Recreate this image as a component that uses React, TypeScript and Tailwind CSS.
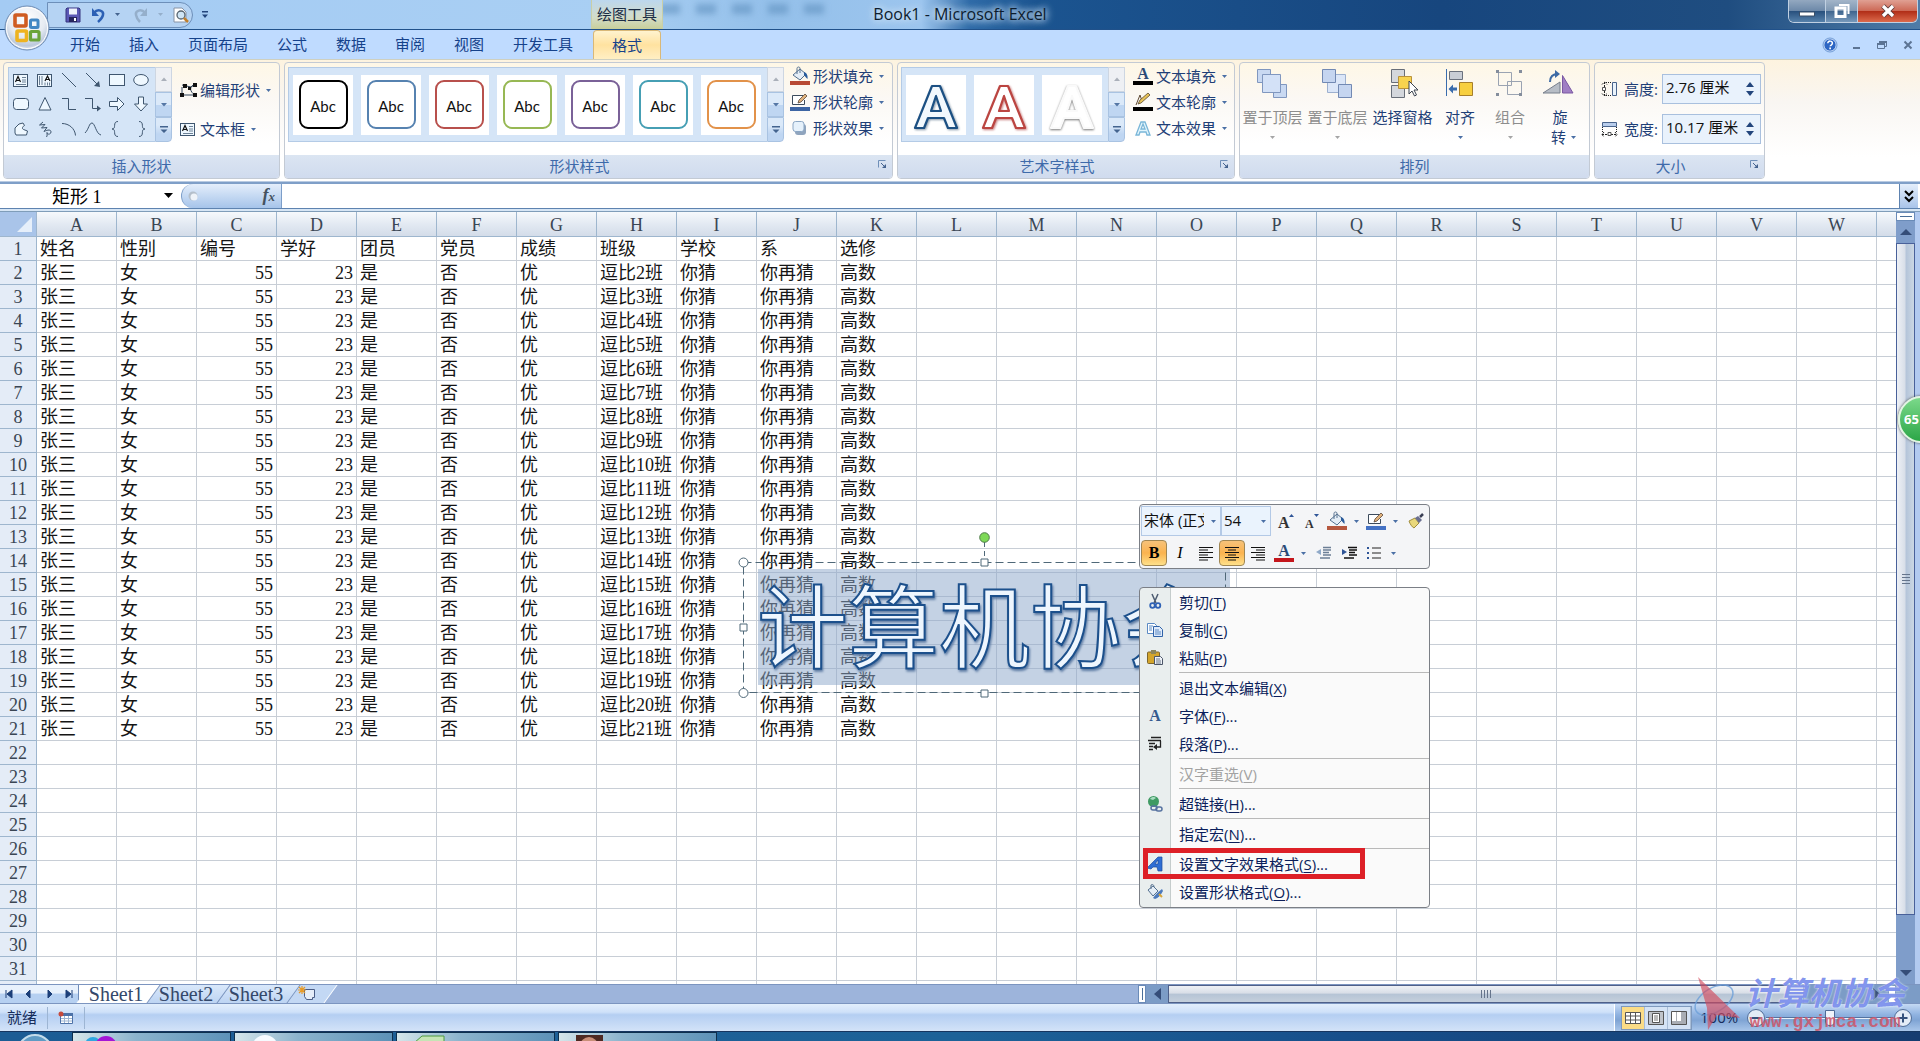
import React from 'react';

const UI = "font-['Open_Sans','Noto_Sans_CJK_SC',sans-serif]";
const SONG = "font-['Liberation_Serif','Noto_Sans_CJK_SC',serif]";

type P = { children?: React.ReactNode };

function Icon({ w = 16, h = 16, children }: P & { w?: number; h?: number }) {
  return (
    <svg width={w} height={h} viewBox={`0 0 ${w} ${h}`} fill="none" className="shrink-0 overflow-visible" aria-hidden="true">
      {children}
    </svg>
  );
}

function Down({ color = '#4a6fa5' }: { color?: string }) {
  return (
    <Icon w={7} h={5}>
      <path d="M1 1h5L3.5 4z" fill={color} />
    </Icon>
  );
}

/* ---------- Title bar ---------- */

function OfficeLogo() {
  return (
    <svg width="48" height="48" viewBox="0 0 48 48" aria-hidden="true">
      <defs>
        <radialGradient id="orb" cx="50%" cy="30%" r="75%">
          <stop offset="0" stopColor="#ffffff" />
          <stop offset="0.55" stopColor="#e6ebf2" />
          <stop offset="0.8" stopColor="#bcc9dc" />
          <stop offset="1" stopColor="#f4f8fc" />
        </radialGradient>
      </defs>
      <circle cx="24" cy="24" r="22" fill="url(#orb)" stroke="#6f8db4" />
      <circle cx="24" cy="24" r="20.5" stroke="#ffffff" fill="none" />
      <g fill="none" strokeWidth="3.6">
        <rect x="12" y="11" width="11" height="11" rx="1" stroke="#cf5c22" />
        <rect x="27.5" y="16" width="7.5" height="7.5" rx="1" stroke="#4287c4" strokeWidth="3" />
        <rect x="14" y="27" width="9.500" height="9.500" rx="1" stroke="#eeb320" />
        <rect x="27.500" y="27.500" width="8.500" height="8.500" rx="1" stroke="#6ba43a" strokeWidth="3.200" />
      </g>
    </svg>
  );
}

function TitleBar() {
  return (
    <header className="relative flex h-[30px] shrink-0 items-center border-b border-[#20518a] bg-[linear-gradient(90deg,#a4cbf3_0%,#a9cff3_32%,#94c0ea_40%,#9cc5ee_48%,#2f6ba8_50.5%,#1b5490_54%,#17467e_75%,#1f4d80_90%,#4f7ca8_100%)]">
      <button aria-label="Office 按钮" className="absolute left-[3px] top-1 z-20">
        <OfficeLogo />
      </button>
      <div className="ml-[47px] flex h-[26px] w-[146px] items-center rounded-r-full border border-[#6d8fb9] bg-[#b5d3f3] pl-[17px]">
        <button aria-label="保存" className="mr-[9px]">
          <Icon>
            <path d="M2 1h12l1 1v13H1V2z" fill="#5b58b5" stroke="#37347f" />
            <path d="M4 1.500h8v6H4z" fill="#eef2fb" />
            <path d="M4 10h8v5H4z" fill="#26255e" />
            <path d="M9 11h2v3H9z" fill="#fff" />
          </Icon>
        </button>
        <button aria-label="撤消" className="mr-2">
          <Icon>
            <path d="M4 6c4-5 10-2 9 2-.5 3-3 5-5 7" stroke="#2c60b4" strokeWidth="2.500" />
            <path d="M2 1v8h7z" fill="#2c60b4" />
          </Icon>
        </button>
        <button aria-label="撤消列表" className="mr-3"><Down color="#45648f" /></button>
        <button aria-label="恢复" className="mr-2">
          <Icon>
            <path d="M12 6C8 1 2 4 3 8c.5 3 2 5 4 7" stroke="#95afcb" strokeWidth="2.500" />
            <path d="M14 1v8H7z" fill="#95afcb" />
          </Icon>
        </button>
        <button aria-label="恢复列表" className="mr-2"><Down color="#95afcb" /></button>
        <button aria-label="打印预览">
          <Icon w={17}>
            <path d="M2 1h8l4 4v10H2z" fill="#fff" stroke="#8793a5" />
            <circle cx="9" cy="8" r="4" fill="#cfe5f5" stroke="#56636f" strokeWidth="1.300" />
            <path d="M12 11l4 4" stroke="#c07f2e" strokeWidth="2.500" />
          </Icon>
        </button>
      </div>
      <button aria-label="自定义快速访问工具栏" className="ml-2">
        <Icon w={8} h={9}>
          <path d="M1 1h6v1.500H1zM1 4.500h6L4 8z" fill="#23457c" />
        </Icon>
      </button>
      <div className="absolute left-[660px] top-1 flex gap-4 blur-[3px]" aria-hidden="true">
        {[0, 1, 2, 3, 4].map((i) => (
          <span key={i} className="h-2.5 w-5 bg-[#5f8fbe]/60" />
        ))}
      </div>
      <h1 className="absolute inset-x-0 top-0 text-center text-base leading-7 text-[#0c1c2e] [text-shadow:0_0_6px_#cfe3f5,0_0_8px_#cfe3f5,0_0_10px_#b8d4ee]">
        Book1 - Microsoft Excel
      </h1>
      <div className="absolute left-[591px] top-0 flex h-[29px] w-[72px] items-center justify-center border-x border-[#c9cfa8] bg-[linear-gradient(180deg,#bcd7ee_0%,#d3dcc9_60%,#c8cf9a_100%)] text-[15px] text-[#1a2c44]">
        绘图工具
      </div>
      <div className="absolute right-0.5 top-0 flex h-[23px] overflow-hidden rounded-b-md border border-t-0 border-[#c0d0e2]">
        <button aria-label="最小化" className="flex w-9 items-center justify-center bg-[linear-gradient(180deg,#93a8c0_0%,#6d89a9_48%,#274f7c_50%,#5681ab_100%)]">
          <Icon>
            <path d="M.5 9h15v4H.5z" fill="#fff" stroke="#3b4f68" />
          </Icon>
        </button>
        <button aria-label="还原" className="flex w-[33px] items-center justify-center border-x border-[#c0d0e2] bg-[linear-gradient(180deg,#a3b5c9_0%,#7f98b3_48%,#3e648d_50%,#7799bb_100%)]">
          <Icon w={18} h={18}>
            <path d="M6 3h9.500v9" stroke="#fff" strokeWidth="2" />
            <rect x="3" y="6" width="9" height="8.500" stroke="#fff" strokeWidth="3" />
          </Icon>
        </button>
        <button aria-label="关闭" className="flex w-[59px] items-center justify-center bg-[linear-gradient(180deg,#e0a093_0%,#cd6a57_48%,#b02c16_50%,#dc6a4c_100%)]">
          <Icon>
            <path d="M3 3l10 10M13 3L3 13" stroke="#5a3a3a" strokeWidth="5" />
            <path d="M3 3l10 10M13 3L3 13" stroke="#fff" strokeWidth="3.200" />
          </Icon>
        </button>
      </div>
    </header>
  );
}

function TabStrip() {
  const tabs = ['开始', '插入', '页面布局', '公式', '数据', '审阅', '视图', '开发工具'];
  return (
    <nav className="flex h-[29px] shrink-0 items-center bg-[#bfdbff] pl-[70px] text-[15px] text-[#15428b]">
      <div className="flex gap-[29px]">
        {tabs.map((t) => (
          <button key={t}>{t}</button>
        ))}
      </div>
      <button className="ml-5 h-[29px] w-[68px] rounded-t border border-b-0 border-[#d9b878] bg-[linear-gradient(180deg,#fff3cf_0%,#ffe2a0_50%,#ffefc4_100%)]">
        格式
      </button>
      <div className="ml-auto flex items-center gap-2.5 pr-1">
        <button aria-label="帮助">
          <Icon>
            <circle cx="8" cy="8" r="6.200" fill="#2d66c4" stroke="#dce9fb" />
            <circle cx="8" cy="8" r="7" stroke="#4e7fc6" strokeWidth=".7" />
            <path d="M5.800 6.300c0-3 4.600-2.800 4.600 0 0 1.700-2.200 1.700-2.200 3" stroke="#fff" strokeWidth="1.500" />
            <path d="M7.300 10.500h1.700v1.700H7.300z" fill="#fff" />
          </Icon>
        </button>
        <button aria-label="最小化工作簿">
          <Icon><path d="M5 10h7v2H5z" fill="#5c7494" /></Icon>
        </button>
        <button aria-label="还原工作簿">
          <Icon>
            <path d="M5.500 4.500h7v5h-7z" stroke="#5c7494" />
            <path d="M5 4h8v2H5z" fill="#5c7494" />
            <path d="M3.500 6.500h7v5h-7z" fill="#bfdbff" stroke="#5c7494" />
            <path d="M3 6h8v2H3z" fill="#5c7494" />
          </Icon>
        </button>
        <button aria-label="关闭工作簿">
          <Icon><path d="M4.500 4.500l7 7M11.500 4.500l-7 7" stroke="#5c7494" strokeWidth="2" /></Icon>
        </button>
      </div>
    </nav>
  );
}

/* ---------- Ribbon ---------- */

function Group({ title, className, launcher, children }: P & { title: string; className: string; launcher?: boolean }) {
  return (
    <section
      className={`flex h-[117px] shrink-0 flex-col overflow-hidden rounded border border-[#c3cad4] bg-[linear-gradient(180deg,#fef7e6_0%,#fbf8f4_30%,#ffffff_70%)] ${className}`}
    >
      <div className="flex flex-1">{children}</div>
      <div className="flex h-[23px] items-center bg-[linear-gradient(180deg,#dbe5f2,#d0dbee)] text-[15px] leading-none text-[#3e6aaa]">
        <h2 className="flex-1 text-center">{title}</h2>
        {launcher && (
          <button aria-label={`${title}选项`} className="mb-1.5 mr-1">
            <Icon w={14} h={10}>
              <path d="M4.500 8.500v-7h7" stroke="#6f8fb8" />
              <path d="M7 4l3.500 3.500" stroke="#45638f" />
              <path d="M12 5v4H8z" fill="#45638f" />
            </Icon>
          </button>
        )}
      </div>
    </section>
  );
}

function GalleryScroll() {
  return (
    <div className="flex w-[17px] flex-col text-[0px]">
      <button aria-label="上一行" className="flex flex-1 items-center justify-center border border-[#cdd6e2] bg-[#eef0f4]">
        <Icon w={8} h={5}><path d="M1 4h6L4 .5z" fill="#aab0ba" /></Icon>
      </button>
      <button aria-label="下一行" className="flex flex-1 items-center justify-center border border-[#a9c3e2] bg-[linear-gradient(180deg,#dbe9f9_50%,#bfd6f2_50%)]">
        <Icon w={8} h={5}><path d="M1 1h6L4 4.500z" fill="#5577a5" /></Icon>
      </button>
      <button aria-label="更多" className="flex flex-1 items-center justify-center rounded-br border border-[#a9c3e2] bg-[linear-gradient(180deg,#dbe9f9_30%,#bfd6f2_70%)]">
        <Icon w={8} h={9}><path d="M0 1h8v1.500H0zM.5 4.500h7L4 8z" fill="#44648f" /></Icon>
      </button>
    </div>
  );
}

const S = '#3f566f';
const F = '#eff8ff';
const shapes: [string, React.ReactNode][] = [
  ['文本框', <><rect x=".5" y="2.500" width="14" height="12" fill={F} stroke={S} /><path d="M2.500 10L5 4.500 7.500 10M3.500 8.500h3" stroke="#111" strokeWidth="1.200" /><path d="M9 5.500h4M9 8h4M3 12.500h10M9 10h4" stroke="#6d8196" /></>],
  ['竖排文本框', <><rect x=".5" y="2.500" width="14" height="12" fill={F} stroke={S} /><path d="M8 9l2.500-5L13 9M9 7.500h3" stroke="#111" strokeWidth="1.200" /><path d="M2.500 4v9M5 4v9M8 10.500v3M10.500 10.500v3M12.500 10.500v3" stroke="#6d8196" /></>],
  ['直线', <path d="M1 1l14 14" stroke={S} />],
  ['箭头', <><path d="M1 1l12 12" stroke={S} /><path d="M15 15l-6-1 5-5z" fill={S} /></>],
  ['矩形', <rect x=".5" y="2.500" width="15" height="11" fill={F} stroke={S} />],
  ['椭圆', <ellipse cx="8" cy="8" rx="7.300" ry="5.500" fill={F} stroke={S} />],
  ['圆角矩形', <rect x=".5" y="2.500" width="15" height="11" rx="3" fill={F} stroke={S} />],
  ['三角形', <path d="M8 1.500l6 12.500H2z" fill={F} stroke={S} />],
  ['肘形连接符', <path d="M1 2.500h6.500v11H15" stroke={S} />],
  ['肘形箭头', <><path d="M0 2.500h7.500v10H14" stroke={S} /><path d="M16 12.500l-4-3v6z" fill={S} /></>],
  ['右箭头', <path d="M.5 5.500h8V1.500l6.500 6.500-6.500 6.500v-4h-8z" fill={F} stroke={S} />],
  ['下箭头', <path d="M5.500 1v7h-4l6.500 7 6.500-7h-4V1z" fill={F} stroke={S} />],
  ['任意多边形', <path d="M3 14h10.500l1-4-4-1.500c-2-1-1-3 1-4L10 2 6 3 2 7v5z" fill={F} stroke={S} />],
  ['自由曲线', <path d="M6 1L2.500 4 8 3.500 4.500 7l5.500-.5-3 4c4-2 7-2 7 .5s-4 3-4 .5c0 2 .5 3-.5 4.500" stroke={S} />],
  ['弧形', <path d="M1 2.500c7 0 13 5 13.500 12" stroke={S} />],
  ['曲线', <path d="M0 12C4 8 4 2 7 2s4 11 9 12" stroke={S} />],
  ['左大括号', <path d="M9 .5C3 .5 8 8 3 8c5 0 0 7.500 6 7.500" stroke={S} />],
  ['右大括号', <path d="M6 .5c6 0 1 7.500 6 7.500-5 0 0 7.500-6 7.500" stroke={S} />],
];

function MenuButton({ icon, label }: { icon: React.ReactNode; label: string }) {
  return (
    <button className="flex h-[26px] items-center text-[15px] leading-5 text-[#1f3f77]">
      {icon}
      <span className="ml-[3px] mr-[5px] whitespace-nowrap">{label}</span>
      <Down />
    </button>
  );
}

function Bucket({ bar = '#b84a34' }: { bar?: string }) {
  return (
    <Icon w={20} h={20}>
      <path d="M3 9l7-6 6 5-6 6z" fill="#e4edf6" stroke="#54708f" />
      <path d="M7 8V2.500c0-2 3-2 3 0V7" stroke="#54708f" />
      <path d="M14 6c3 1 4 4 3.500 7-1.500-1-2.500-3-3.500-4z" fill="#2a5c9c" />
      <path d="M0 15h20v4H0z" fill={bar} />
    </Icon>
  );
}

function Pen({ bar = '#3e65a4' }: { bar?: string }) {
  return (
    <Icon w={20} h={20}>
      <path d="M13 3.500H2.500v9h12V8" stroke="#3c4b5c" fill="#fff" />
      <path d="M8 11l1-3 6-6 2 2-6 6z" fill="#e0b27c" stroke="#5a4637" strokeWidth=".8" />
      <path d="M0 15h20v4H0z" fill={bar} />
    </Icon>
  );
}

function LetterA({ bar }: { bar: string }) {
  return (
    <Icon w={20} h={20}>
      <text x="10" y="13" textAnchor="middle" fontFamily="Liberation Serif" fontWeight="bold" fontSize="16" fill="#2b4a78">A</text>
      <path d="M0 15h20v4H0z" fill={bar} />
    </Icon>
  );
}

function BigButton({ label, icon, disabled, narrow, last }: { label: string; icon: React.ReactNode; disabled?: boolean; narrow?: boolean; last?: boolean }) {
  return (
    <button
      disabled={disabled}
      className={`flex flex-col items-center pt-1 text-[15px] leading-5 text-[#1f3f77] disabled:text-[#8d8d8d] ${narrow ? 'w-[50px]' : 'w-[65px]'}`}
    >
      <span className="pr-1">{icon}</span>
      {last ? (
        <>
          <span className="mt-2">旋</span>
          <span className="flex items-center gap-1 pl-2">转<Down /></span>
        </>
      ) : (
        <>
          <span className="mt-2 whitespace-nowrap">{label}</span>
          {label !== '选择窗格' && <span className="mt-2"><Down color={disabled ? '#a5a5a5' : '#4a6fa5'} /></span>}
        </>
      )}
    </button>
  );
}

function SizeField({ id, label, value, icon }: { id: string; label: string; value: string; icon: React.ReactNode }) {
  return (
    <div className="flex h-[30px] items-center">
      {icon}
      <label htmlFor={id} className="ml-1.5 w-[38px] whitespace-nowrap text-[15px] text-[#1f3f77]">{label}</label>
      <div className="flex h-[30px] w-[99px] items-center border border-[#a9c0de] bg-[#e9f2fc] pr-1">
        <input id={id} defaultValue={value} className="w-0 min-w-0 flex-1 bg-transparent pb-1 pl-[3px] text-[15px] text-[#111] outline-none" />
        <div className="flex flex-col gap-1">
          <button aria-label={`增加${label}`}><Icon w={13} h={5}><path d="M3 5h8L7 0z" fill="#23457c" /></Icon></button>
          <button aria-label={`减少${label}`}><Icon w={13} h={5}><path d="M3 0h8L7 5z" fill="#23457c" /></Icon></button>
        </div>
      </div>
    </div>
  );
}

function WordArtTile({ fill, stroke, label, blur }: { fill: string; stroke: string; label: string; blur: string }) {
  return (
    <button aria-label={label} className="h-[60px] w-[60px] bg-white">
      <svg width="60" height="60" viewBox="0 0 60 60" aria-hidden="true" className={blur}>
        <path d="M9 53L26 11h8l17 42h-9l-4-10H22l-4 10zM25 36h10L30 21z" fill={fill} stroke={stroke} strokeWidth="2.200" fillRule="evenodd" strokeLinejoin="round" />
      </svg>
    </button>
  );
}

function Ribbon() {
  const borders = ['border-black', 'border-[#5682b0]', 'border-[#b8504c]', 'border-[#97b854]', 'border-[#7a6198]', 'border-[#469fb4]', 'border-[#e2924a]'];
  const gallery = 'flex h-[75px] items-center border border-r-0 border-[#b4cbe6] bg-[#d5e5f7]';
  return (
    <div className="flex h-[123px] shrink-0 gap-1 overflow-hidden border-b border-[#b9cbe2] border-t border-t-[#cfd0c0] bg-[linear-gradient(180deg,#fdf3df_0%,#f9f6f2_35%,#ffffff_80%)] pl-[3px] pt-0.5">
      <Group title="插入形状" className="w-[277px]">
        <div className="ml-1 mt-1 flex h-[75px]">
          <div className="grid grid-cols-6 border border-r-0 border-[#b4cbe6] bg-[#d5e5f7] pr-0.5">
            {shapes.map(([name, d]) => (
              <button key={name} aria-label={name} className="flex w-6 items-center justify-center">
                <Icon>{d}</Icon>
              </button>
            ))}
          </div>
          <GalleryScroll />
        </div>
        <div className="ml-2 mt-[14px] flex flex-col items-start gap-[13px]">
          <MenuButton
            label="编辑形状"
            icon={
              <Icon w={17}>
                <path d="M2 3L11 5l5-3M2 13h13M16 2c-8 2-6 8-1 11M2 13V5" stroke="#33475e" />
                <path d="M0 11h4v4H0zM13 11h4v4h-4zM13 1h4v4h-4zM3 2h4v4H3zM8 5h3v3H8z" fill="#111" />
              </Icon>
            }
          />
          <MenuButton label="文本框" icon={<Icon w={17}>{shapes[0][1]}</Icon>} />
        </div>
      </Group>

      <Group title="形状样式" className="w-[609px]" launcher>
        <div className="ml-[3px] mt-1 flex h-[75px]">
          <div className={`${gallery} gap-2 pl-1 pr-1.5`}>
            {borders.map((b) => (
              <button key={b} className="flex h-[60px] w-[60px] items-center justify-center bg-white">
                <span className={`flex h-[49px] w-[49px] items-center justify-center rounded-[9px] border-2 bg-white pt-1 font-['Lato'] text-[15px] text-[#111] ${b}`}>Abc</span>
              </button>
            ))}
          </div>
          <GalleryScroll />
        </div>
        <div className="ml-1.5 flex flex-col">
          <MenuButton label="形状填充" icon={<Bucket />} />
          <MenuButton label="形状轮廓" icon={<Pen />} />
          <MenuButton
            label="形状效果"
            icon={
              <Icon w={20}>
                <rect x="5" y="4" width="11" height="11" rx="3" fill="#8fa4bd" />
                <rect x="3" y="1.500" width="11" height="10" rx="2.500" fill="#e6f1fb" stroke="#8ba6c4" />
              </Icon>
            }
          />
        </div>
      </Group>

      <Group title="艺术字样式" className="w-[338px]" launcher>
        <div className="ml-[3px] mt-1 flex h-[75px]">
          <div className={`${gallery} gap-2 pl-1 pr-1.5`}>
            <WordArtTile label="蓝色轮廓" fill="#f2f8fd" stroke="#1c5083" blur="drop-shadow-[1px_1px_1px_#8899aa]" />
            <WordArtTile label="红色轮廓" fill="#ffffff" stroke="#bb4541" blur="drop-shadow-[1px_1px_1px_#c98080]" />
            <WordArtTile label="白色阴影" fill="#ffffff" stroke="#fafafa" blur="drop-shadow-[0_1px_1px_#777777]" />
          </div>
          <GalleryScroll />
        </div>
        <div className="ml-2 flex flex-col">
          <MenuButton label="文本填充" icon={<LetterA bar="#000" />} />
          <MenuButton
            label="文本轮廓"
            icon={
              <Icon w={20} h={20}>
                <path d="M3 13L7 3l2 6" stroke="#5f4a34" />
                <path d="M5 12l3-1 9-8-2-2-8 7z" fill="#e6c158" stroke="#5b4a2f" strokeWidth=".8" />
                <path d="M0 15h20v4H0z" fill="#000" />
              </Icon>
            }
          />
          <MenuButton
            label="文本效果"
            icon={
              <Icon w={20}>
                <path d="M3 15L8 2h4l5 13h-3l-1-3H7l-1 3zM8 9h4l-2-5z" fill="#e2f5fc" stroke="#7ab6d8" strokeWidth="1.300" />
              </Icon>
            }
          />
        </div>
      </Group>

      <Group title="排列" className="w-[351px]">
        <div className="flex">
          <BigButton label="置于顶层" disabled icon={<Icon w={32} h={32}><path d="M2.500 2.500h13v13h-13zM18.500 17.500h13v13h-13z" fill="#c9d9f2" stroke="#8097bf" /><path d="M7.500 7.500h18v18h-18z" fill="#d3e1f7" stroke="#8097bf" /></Icon>} />
          <BigButton label="置于底层" disabled icon={<Icon w={32} h={32}><path d="M7.500 7.500h18v18h-18z" fill="#dbe6f8" stroke="#9db0cf" /><path d="M2.500 2.500h13v13h-13zM18.500 17.500h13v13h-13z" fill="#c5d5f0" stroke="#7289b3" /></Icon>} />
          <BigButton label="选择窗格" icon={<Icon w={32} h={32}><path d="M6.500 2.500h13v13h-13zM6.500 18.500h13v12h-13z" fill="#d4d7dc" stroke="#686e78" /><path d="M13.500 9.500h13v12h-13z" fill="#f7d34f" stroke="#b9923a" /><path d="M24 14v13l3-3 2.500 5 2-1-2.500-5h4z" fill="#fff" stroke="#3b4450" /></Icon>} />
          <BigButton label="对齐" narrow icon={<Icon w={32} h={32}><path d="M4.500 2v27" stroke="#3a6cad" /><path d="M7.500 4.500h13v8h-13z" fill="#c9ced6" stroke="#6a717d" /><path d="M17.500 15.500h13v13h-13z" fill="#f7cf3f" stroke="#a67f2c" /><path d="M15 20.500v3h-4v3l-4.500-4.500 4.500-4.500v3z" fill="#3a6cad" /></Icon>} />
          <BigButton label="组合" narrow disabled icon={<Icon w={32} h={32}><path d="M6.500 5.500h13v13h-13zM15.500 14.500h14v13h-14z" stroke="#9aa3b2" /><path d="M4 3h3v3H4zM27 3h3v3h-3zM4 26h3v3H4zM27 26h3v3h-3z" fill="#848d9c" /></Icon>} />
          <BigButton label="旋转" narrow last icon={<Icon w={32} h={32}><path d="M18 15v11H1z" fill="#b7bdc6" stroke="#777f8c" /><path d="M20.500 8.500V26H31z" fill="#a07fc4" stroke="#7b58a3" /><path d="M8 15c0-5 3-8 8-8" stroke="#3d6aa5" strokeWidth="2" /><path d="M13 3l5 4-5 4z" fill="#3d6aa5" /></Icon>} />
        </div>
      </Group>

      <Group title="大小" className="w-[171px]" launcher>
        <div className="ml-1.5 mt-[11px] flex flex-col gap-2.5">
          <SizeField id="h" label="高度:" value="2.76 厘米" icon={<Icon w={17}><path d="M3.500 1v14M1 3.500L3.500 1 6 3.500M1 12.500L3.500 15 6 12.500" stroke="#222" strokeDasharray="2 1" /><path d="M11.500 1.500h4v13h-4z" fill="#eaf3fb" stroke="#4a648c" /><path d="M1.500 6.500h3v3h-3z" fill="#fff" stroke="#555" /><path d="M5 1.500h6M5 14.500h6" stroke="#222" strokeDasharray="1 1" /></Icon>} />
          <SizeField id="w" label="宽度:" value="10.17 厘米" icon={<Icon w={17}><path d="M1.500 1.500h14v4h-14z" fill="#b9cdeb" stroke="#4a648c" /><path d="M1 13.500h15M3 11l-2 2.500L3 16M14 11l2 2.500-2 2.500" stroke="#222" strokeDasharray="2 1" /><path d="M7 11.500h3v3H7z" fill="#fff" stroke="#555" /><path d="M1.500 6v5M15.500 6v5" stroke="#222" strokeDasharray="1 1" /></Icon>} />
        </div>
      </Group>
    </div>
  );
}

function FormulaBar() {
  return (
    <div className="flex h-[30px] shrink-0 items-start border-b border-[#7f9db9] bg-[#d7e6f5]">
      <div className="flex h-[27px] w-full border-y border-[#5e83b0] bg-white border-t-2 border-t-[#7f9fc8]">
        <input aria-label="名称框" defaultValue="矩形 1" className={`w-[162px] pl-[52px] pt-0.5 text-[18px] text-black outline-none ${SONG}`} />
        <button aria-label="名称列表" className="flex w-[19px] items-center">
          <Icon w={11} h={6}><path d="M2 0h9L6.500 5z" fill="#000" /></Icon>
        </button>
        <div className="flex w-[101px] items-center justify-between rounded-l-full border-x border-[#7c9ec9] bg-[linear-gradient(180deg,#e4eefb_0%,#a6c4ea_100%)] pl-1.5 pr-1.5">
          <Icon w={10} h={10}><circle cx="5" cy="5" r="4.500" fill="#b4bfcb" /><circle cx="6" cy="6" r="3.500" fill="#eef3f9" /></Icon>
          <button aria-label="插入函数" className="font-['Liberation_Serif'] text-[18px] font-bold italic leading-5 text-[#44525f]">
            f<span className="text-[13px]">x</span>
          </button>
        </div>
        <input aria-label="编辑栏" className="min-w-0 flex-1 outline-none" />
        <button aria-label="展开编辑栏" className="mr-0.5 flex w-[19px] items-center justify-center border-l border-[#5e83b0] bg-[linear-gradient(180deg,#e4eefb,#a9c4ea)]">
          <Icon w={12} h={14}><path d="M2 2l4 4 4-4M2 8l4 4 4-4" stroke="#000" strokeWidth="2" /></Icon>
        </button>
      </div>
    </div>
  );
}

/* ---------- Worksheet ---------- */

const letters = 'ABCDEFGHIJKLMNOPQRSTUVW'.split('');
const heads = ['姓名', '性别', '编号', '学好', '团员', '党员', '成绩', '班级', '学校', '系', '选修'];

function cellText(row: number, col: number): string {
  if (row > 21 || col > 10) return '';
  if (row === 1) return heads[col];
  return ['张三', '女', '55', '23', '是', '否', '优', `逗比${row}班`, '你猜', '你再猜', '高数'][col];
}

function Grid() {
  const rows = Array.from({ length: 32 }, (_, i) => i + 1);
  return (
    <table className={`w-full table-fixed border-separate border-spacing-0 bg-white text-[18px] leading-[21px] text-[#151515] ${SONG}`}>
      <colgroup>
        <col className="w-[37px]" />
        {letters.map((l) => <col key={l} className="w-20" />)}
        <col />
      </colgroup>
      <thead>
        <tr className="h-[25px] bg-[linear-gradient(180deg,#f6f9fc_0%,#e2e9f2_50%,#d2dbe8_100%)] text-[#3a4654]">
          <th aria-label="全选" className="border-b border-r border-[#9eb6ce] bg-[#a9c4e9] p-0">
            <Icon w={36} h={24}><path d="M32 5v15H17z" fill="#e6effa" /></Icon>
          </th>
          {letters.map((l) => (
            <th key={l} scope="col" className="border-b border-r border-[#9eb6ce] p-0 pt-0.5 font-normal">{l}</th>
          ))}
          <th className="border-b border-[#9eb6ce] p-0" />
        </tr>
      </thead>
      <tbody>
        {rows.map((r) => (
          <tr key={r} className="h-6">
            <th scope="row" className="border-b border-r border-[#9eb6ce] bg-[#e4ecf7] p-0 pt-0.5 font-normal text-[#3a4654]">{r < 32 ? r : ''}</th>
            {letters.map((l, c) => (
              <td
                key={l}
                className={`whitespace-nowrap border-b border-r border-[#c8ced6] px-[3px] pb-0 pt-0.5 ${r > 1 && (c === 2 || c === 3) ? 'text-right' : ''}`}
              >
                {cellText(r, c)}
              </td>
            ))}
            <td className="border-b border-[#c8ced6] p-0" />
          </tr>
        ))}
      </tbody>
    </table>
  );
}

function WordArt() {
  return (
    <div className="absolute left-[743px] top-[350px] h-[131px] w-[483px]">
      <svg width="483" height="131" className="absolute inset-0 overflow-visible" aria-hidden="true">
        <rect x="15" y="7" width="472" height="116" fill="#8ea8cc" fillOpacity="0.52" />
        <rect x=".5" y=".5" width="482" height="130" fill="none" stroke="#4f6878" strokeDasharray="8 4" />
        <path d="M241.500 -20V0" stroke="#4f6878" strokeDasharray="5 4" />
        <circle cx="241.500" cy="-24.500" r="4.800" fill="#7ed957" stroke="#4f7a4a" />
        <g fill="#fff" stroke="#4f6878">
          <circle cx=".5" cy=".5" r="4.500" />
          <circle cx=".5" cy="131" r="4.500" />
          <path d="M238 -3h7v7h-7zM238 128h7v7h-7zM-3 62h7v7h-7z" />
        </g>
      </svg>
      <p className="absolute left-[14px] top-3 whitespace-nowrap font-['Liberation_Serif','Noto_Sans_CJK_SC',serif] text-[91px] leading-[114px] text-[#eef6fe] drop-shadow-[1px_2px_1px_#5d7ba3] [-webkit-text-stroke:2px_#1c508c]">
        计算机协会
      </p>
    </div>
  );
}

const alignPath = {
  left: 'M1 2.500h14M1 5h9M1 7.500h14M1 10h9M1 12.500h14M1 15h9',
  center: 'M1 2.500h14M4 5h8M1 7.500h14M4 10h8M1 12.500h14M4 15h8',
  right: 'M1 2.500h14M6 5h9M1 7.500h14M6 10h9M1 12.500h14M6 15h9',
};

function MiniToolbar() {
  const field = 'h-[30px] appearance-none border border-[#b3c9e6] bg-[#eaf3fd] pb-0.5 pl-0.5 text-[15px] text-[#111] outline-none';
  const on = 'flex h-[26px] w-[26px] items-center justify-center rounded-sm border border-[#a08653] bg-[linear-gradient(180deg,#f6c27a_0%,#fbb34f_50%,#fee08a_100%)]';
  const off = 'flex h-[26px] w-[26px] items-center justify-center';
  return (
    <div className="absolute left-[1139px] top-[292px] flex w-[291px] flex-col gap-1 rounded border border-[#7b7f86] bg-[#f4f5f7] p-px pb-0.5">
      <div className="flex items-center">
        <div className="relative flex items-center">
          <select aria-label="字体" className={`${field} w-20 pr-4`}><option>宋体 (正文)</option></select>
          <span className="pointer-events-none absolute right-1"><Down /></span>
        </div>
        <div className="relative flex items-center">
          <select aria-label="字号" className={`${field} w-[50px]`}><option>54</option></select>
          <span className="pointer-events-none absolute right-1"><Down /></span>
        </div>
        <button aria-label="增大字号" className={`${off} ml-0.5`}><Icon w={16} h={18}><text x="0" y="16" fontFamily="Liberation Serif" fontWeight="bold" fontSize="16" fill="#333">A</text><path d="M11 5h5l-2.500-3z" fill="#2f5597" /></Icon></button>
        <button aria-label="减小字号" className={off}><Icon w={16} h={18}><text x="2" y="16" fontFamily="Liberation Serif" fontWeight="bold" fontSize="12" fill="#333">A</text><path d="M11 2h5l-2.500 3z" fill="#2f5597" /></Icon></button>
        <button aria-label="形状填充" className="ml-1 flex items-center gap-1.5"><Bucket bar="#b5583f" /><Down /></button>
        <button aria-label="形状轮廓" className="ml-1.5 flex items-center gap-1.5"><Pen bar="#4472c4" /><Down /></button>
        <button aria-label="格式刷" className={`${off} ml-1`}>
          <Icon>
            <path d="M1 8l6-3 4 5-5 5c-2-1-4-4-5-7z" fill="#e9d87c" stroke="#a08d3d" />
            <path d="M7 5l3-2 4 4-3 3z" fill="#6a6f90" />
            <path d="M12 4l3-3" stroke="#3b3f55" strokeWidth="2.500" />
          </Icon>
        </button>
      </div>
      <div className="flex items-center">
        <button aria-label="加粗" aria-pressed="true" className={`${on} font-['Liberation_Serif'] text-base font-bold`}>B</button>
        <button aria-label="倾斜" className={`${off} font-['Liberation_Serif'] text-base italic`}>I</button>
        <button aria-label="左对齐" className={off}><Icon><path d={alignPath.left} stroke="#111" /></Icon></button>
        <button aria-label="居中" aria-pressed="true" className={on}><Icon><path d={alignPath.center} stroke="#111" /></Icon></button>
        <button aria-label="右对齐" className={off}><Icon><path d={alignPath.right} stroke="#111" /></Icon></button>
        <button aria-label="字体颜色" className="ml-[3px] flex items-center gap-1.5"><LetterA bar="#c4161c" /><Down /></button>
        <button aria-label="减少缩进" className={`${off} ml-[3px]`}><Icon><path d="M8 2.500h8M8 5h8M8 7.500h6M8 10h8M5 13h10" stroke="#6c7f96" strokeWidth="1.500" /><path d="M6 4v6L1 7z" fill="#8fa9c8" /></Icon></button>
        <button aria-label="增加缩进" className={off}><Icon><path d="M7 2.500h9M8 5h8M8 7.500h6M8 10h8M3 13h10" stroke="#111" strokeWidth="1.500" /><path d="M1 4v6l5-3z" fill="#2f5597" /></Icon></button>
        <button aria-label="项目符号" className="ml-1 flex items-center gap-2"><Icon><path d="M6 3h9M6 8h9M6 13h9" stroke="#222" strokeWidth="1.200" /><path d="M1 2h2v2H1zM1 7h2v2H1zM1 12h2v2H1z" fill="#2f5597" /></Icon><Down /></button>
      </div>
    </div>
  );
}

type Item = { label: string; k: string; more?: boolean; sep?: boolean; disabled?: boolean; boxed?: boolean; icon?: React.ReactNode };

const items: Item[] = [
  { label: '剪切', k: 'T', icon: <><path d="M5 0l4 9M11 0L7 9" stroke="#4c5b70" strokeWidth="1.500" /><circle cx="5.500" cy="11.500" r="2.300" stroke="#2f62b5" strokeWidth="1.800" /><circle cx="11" cy="11.500" r="2.300" stroke="#2f62b5" strokeWidth="1.800" /></> },
  { label: '复制', k: 'C', icon: <><path d="M.5 1.500h7l2 2v8h-9z" fill="#fff" stroke="#5b8ac4" /><path d="M6.500 4.500h6l3 3v7h-9z" fill="#dfeafa" stroke="#2f62a8" /><path d="M2 4h4M2 6h3M2 8h3M8 8h4M8 10h6M8 12h6" stroke="#5b8ac4" /></> },
  { label: '粘贴', k: 'P', icon: <><rect x=".5" y="2" width="12" height="11.500" rx="1" fill="#d3a52b" stroke="#7c652d" /><path d="M4 0h5v4H4z" fill="#8c8558" /><path d="M7.500 6.500h6l2 2v6h-8z" fill="#eef2f8" stroke="#4b5568" /><path d="M9 9h4M9 11h5M9 13h5" stroke="#6d7888" /></> },
  { label: '退出文本编辑', k: 'X', sep: true },
  { label: '字体', k: 'F', more: true, icon: <text x="8" y="13" textAnchor="middle" fontFamily="Liberation Serif" fontWeight="bold" fontSize="16" fill="#345a8e">A</text> },
  { label: '段落', k: 'P', more: true, icon: <><path d="M4 1.500h10M1 4.500h13M2 7.500h6M2 10.500h4M2 13.500h4M13.500 5v6H9" stroke="#222" strokeWidth="1.300" /><path d="M10 8v6l-4-3z" fill="#222" /></> },
  { label: '汉字重选', k: 'V', sep: true, disabled: true },
  { label: '超链接', k: 'H', more: true, sep: true, icon: <><circle cx="6.500" cy="5.500" r="5.500" fill="#3f9a63" /><path d="M3 3c2-3 5-2 6-1L6 4z" fill="#a7dcc0" /><rect x="4" y="10" width="6" height="4" rx="2" stroke="#5672a0" strokeWidth="1.500" /><rect x="9" y="11" width="6" height="4" rx="2" stroke="#5672a0" strokeWidth="1.500" /></> },
  { label: '指定宏', k: 'N', more: true, sep: true },
  { label: '设置文字效果格式', k: 'S', more: true, sep: true, boxed: true, icon: <path d="M0 12L11 1l4 0v14h-4l-1-4H6l-2 2zM8 8h3V4z" fill="#2f6ed3" stroke="#1e4b9c" strokeWidth=".7" fillRule="evenodd" /> },
  { label: '设置形状格式', k: 'O', more: true, icon: <><path d="M1 6l5-4 5 5-5 5z" fill="#e4edf6" stroke="#54708f" /><path d="M4 5V1c2-1 3 0 3 2" stroke="#54708f" /><path d="M6 14c2-3 5-6 9-9l1 2c-2 4-5 7-8 8z" fill="#4b79bd" /><path d="M12 10l3 3" stroke="#d8a63a" strokeWidth="2" /></> },
];

function ContextMenu() {
  return (
    <ul className="absolute left-[1139px] top-[375px] w-[291px] rounded border border-[#7b7f86] bg-[linear-gradient(90deg,#e9eeee_30px,#c5cccc_30px,#c5cccc_31px,#fafafa_31px)] pb-px text-[15px]">
      {items.map((it) => (
        <li key={it.label} className="relative">
          {it.sep && <div className="ml-[39px] h-0.5 border-t border-[#b9b9b9]" />}
          <button disabled={it.disabled} className="flex h-7 w-full items-center pl-[7px] text-[#0b1e5b] disabled:text-[#a2a2a2]">
            <Icon>{it.icon}</Icon>
            <span className="ml-4 whitespace-nowrap">
              {it.label}(<u className="underline-offset-2">{it.k}</u>){it.more ? '...' : ''}
            </span>
          </button>
          {it.boxed && <div className="pointer-events-none absolute left-[3px] top-0 h-[31px] w-[222px] border-5 border-[#dd2027]" />}
        </li>
      ))}
    </ul>
  );
}

function VScroll() {
  return (
    <div className="flex w-[24px] shrink-0 flex-col border-r-[5px] border-[#b2caf0] bg-[#7f9dca]" role="scrollbar" aria-controls="sheet" aria-valuenow={0}>
      <div className="flex h-[9px] items-center justify-center border border-[#6a8bb8] bg-white"><span className="h-px w-3 bg-[#4a6f9a]" /></div>
      <button aria-label="向上滚动" className="flex h-[22px] items-center justify-center">
        <Icon w={12} h={6}><path d="M0 6h12L6 0z" fill="#354d78" /></Icon>
      </button>
      <div className="flex flex-[680] items-center justify-center border border-[#49619a] bg-[linear-gradient(90deg,#eef1f6_0%,#d9dfe9_45%,#b5c5da_55%,#cbd7e4_100%)]">
        <span className="flex flex-col gap-0.5">
          {[0, 1, 2, 3].map((i) => <i key={i} className="h-px w-2 bg-[#66758c]" />)}
        </span>
      </div>
      <button aria-label="向下滚动" className="flex flex-[62] items-end justify-center pb-2">
        <Icon w={12} h={6}><path d="M0 0h12L6 6z" fill="#354d78" /></Icon>
      </button>
    </div>
  );
}

/* ---------- Bottom bars ---------- */

function SheetTabs() {
  const nav: [string, string][] = [
    ['第一张', 'M4 4v8M5 8l5-4v8z'],
    ['上一张', 'M5 8l4-4v8z'],
    ['下一张', 'M7 4l4 4-4 4z'],
    ['最后一张', 'M6 4l5 4-5 4zM12 4v8'],
  ];
  return (
    <div className="flex h-5 shrink-0 border-y border-[#7c95c0] bg-[#9db4db]">
      <div className="flex w-[79px] items-center justify-between border-r border-[#6f8cb9] bg-[linear-gradient(180deg,#e8f1fc_45%,#b6d0f1_50%)] px-0.5">
        {nav.map(([n, d]) => (
          <button key={n} aria-label={n}><Icon><path d={d} fill="#1c3f78" stroke="#1c3f78" strokeWidth="1" /></Icon></button>
        ))}
      </div>
      <div className={`flex text-[20px] leading-[18px] text-[#34486a] ${SONG}`}>
        {['Sheet1', 'Sheet2', 'Sheet3'].map((s, i) => (
          <button key={s} className="relative w-[70px] whitespace-nowrap pl-1">
            <span className={`absolute inset-y-0 left-1 -right-1.5 -skew-x-[36deg] border-r border-[#7690bb] ${i === 0 ? 'bg-white' : 'border-l bg-[linear-gradient(180deg,#d9e8fa,#bdd4f3)]'}`} />
            {i === 0 && <span className="absolute inset-y-0 left-0 w-5 bg-white" />}
            <span className="relative">{s}</span>
          </button>
        ))}
        <button aria-label="插入工作表" className="relative flex w-[36px] items-center justify-center">
          <span className="absolute inset-y-0 left-1 -right-1.5 -skew-x-[36deg] border-x border-l-[#7690bb] border-r-white bg-[#c3d8f4]" />
          <span className="relative">
            <Icon w={18}>
              <path d="M6.500 3.500h10v8h-2v2h-6l-2-3z" fill="#e5edf9" stroke="#4a5d86" />
              <path d="M4 0v8M0 4h8M1 1l6 6M7 1L1 7" stroke="#e99b25" strokeWidth="1.200" />
            </Icon>
          </span>
        </button>
      </div>
      <div className="ml-auto flex w-[782px] bg-[#7c9cc6]">
        <div className="flex w-2 items-center justify-center border border-[#6a8bb8] bg-white"><span className="h-3 w-px bg-[#4a6f9a]" /></div>
        <button aria-label="向左滚动" className="flex w-[22px] items-center justify-center"><Icon w={7} h={12}><path d="M7 0v12L0 6z" fill="#354d78" /></Icon></button>
        <div className="flex flex-1 items-center justify-center gap-0.5 border border-[#4f6089] bg-[linear-gradient(180deg,#eef1f5_0%,#d8dee7_45%,#b5c4d5_50%,#c5d0dc_100%)]">
          {[0, 1, 2, 3].map((i) => <i key={i} className="h-2 w-px bg-[#66758c]" />)}
        </div>
        <button aria-label="向右滚动" className="flex w-[84px] items-center justify-end pr-2"><Icon w={7} h={12}><path d="M0 0v12l7-6z" fill="#354d78" /></Icon></button>
        <div className="mr-6 w-2 border border-[#6a8bb8] bg-white" />
      </div>
    </div>
  );
}

function StatusBar() {
  const view = 'flex h-[22px] w-[23px] items-center justify-center border-r border-[#a9bdd6]';
  return (
    <footer className="flex h-[28px] shrink-0 items-center border-b border-[#16355f] bg-[linear-gradient(180deg,#e2eefc_0%,#cfe1f9_30%,#b4cef2_40%,#d3e3f8_100%)] text-[15px] text-[#152c5b]">
      <span className="pl-[7px]">就绪</span>
      <span className="ml-2.5 h-[22px] w-px bg-[#9db5d3]" />
      <button aria-label="录制宏" className="ml-2.5">
        <Icon>
          <path d="M2.500 3.500h12v10h-12z" fill="#fff" stroke="#4d72a8" />
          <path d="M2 3h13v3H2z" fill="#4d72a8" />
          <path d="M3 8.500h11M3 11h11M6.500 6v7M10.500 6v7" stroke="#9db5d3" />
          <circle cx="3" cy="4" r="2.500" fill="#c64a3c" />
        </Icon>
      </button>
      <span className="ml-2.5 h-[22px] w-px bg-[#9db5d3]" />
      <div className="ml-auto flex h-full w-[306px] items-center border-l border-white bg-[linear-gradient(180deg,#c4d9f4_0%,#8fb2e0_40%,#7fa4d4_60%,#a9c6ea_100%)] pl-1.5">
        <div className="flex border border-[#7e99bd] bg-[#d5e3f5]">
          <button aria-label="普通" aria-pressed="true" className={`${view} bg-[#fbdc86]`}><Icon><path d="M.5 2.500h15v11H.5zM.5 6h15M.5 10h15M5.500 2.500v11M10.500 2.500v11" fill="#fff" stroke="#555" /></Icon></button>
          <button aria-label="页面布局" className={view}><Icon><path d="M.5 1.500h15v13H.5z" fill="#c0c4ca" stroke="#555" /><path d="M4.500 3.500h7v9h-7z" fill="#fff" stroke="#555" /><path d="M6 6h4M6 8h4M6 10h4" stroke="#777" /></Icon></button>
          <button aria-label="分页预览" className={view}><Icon><path d="M.5 1.500h15v13H.5z" fill="#a9adb4" stroke="#555" /><path d="M1 2h4v9H1zM6 2h4v9H6z" fill="#fff" /></Icon></button>
        </div>
        <button className="ml-2">100%</button>
        <button aria-label="缩小" className="ml-2"><Icon w={20} h={20}><circle cx="10" cy="10" r="8.500" fill="#e4ecf7" stroke="#4f6d98" /><path d="M5.500 10h9" stroke="#35517c" strokeWidth="2" /></Icon></button>
        <input
          type="range"
          aria-label="显示比例"
          defaultValue="50"
          className="h-5 w-[127px] appearance-none bg-[linear-gradient(180deg,transparent_9px,#5473a0_9px,#5473a0_10px,#e8f0fa_10px,#e8f0fa_11px,transparent_11px)] [&::-webkit-slider-thumb]:h-4 [&::-webkit-slider-thumb]:w-2.5 [&::-webkit-slider-thumb]:appearance-none [&::-webkit-slider-thumb]:rounded-b [&::-webkit-slider-thumb]:border [&::-webkit-slider-thumb]:border-[#4f6d98] [&::-webkit-slider-thumb]:bg-[#eef3fa]"
        />
        <button aria-label="放大"><Icon w={20} h={20}><circle cx="10" cy="10" r="8.500" fill="#e4ecf7" stroke="#4f6d98" /><path d="M5.500 10h9M10 5.500v9" stroke="#35517c" strokeWidth="2" /></Icon></button>
      </div>
    </footer>
  );
}

function TaskBar() {
  const task = 'flex h-full w-[159px] items-start overflow-hidden border-x border-t border-[#0d2f4d] bg-[linear-gradient(90deg,#d5e6ea_0%,#8cb4cd_40%,#5d92b8_100%)] pl-4';
  return (
    <div className="flex h-[9px] shrink-0 gap-[3px] overflow-hidden bg-[linear-gradient(90deg,#1c5c94_0%,#1d6298_50%,#174f8b_70%,#163c70_100%)]">
      <button aria-label="开始" className="flex w-[69px] items-start justify-center overflow-hidden">
        <Icon w={36} h={36}><circle cx="18" cy="20" r="17" fill="#5f9bc4" stroke="#c4dcea" strokeWidth="2" /></Icon>
      </button>
      <button aria-label="任务 1" className={task}><Icon w={28} h={28}><circle cx="4" cy="12" r="8" fill="#2ea7e0" /><circle cx="17" cy="14" r="11" fill="#a416d6" /></Icon></button>
      <button aria-label="任务 2" className={task}><Icon w={28} h={28}><circle cx="14" cy="15" r="13" fill="#f6fbff" /></Icon></button>
      <button aria-label="任务 3" className={task}><Icon w={32} h={28}><path d="M1 24V10l8-7h22v22z" fill="#c5e5b5" stroke="#4e9a3e" /></Icon></button>
      <button aria-label="任务 4" className={task}><Icon w={28} h={28}><path d="M1 2h27v26H1z" fill="#4e2a22" /><circle cx="14" cy="13" r="9" fill="#c98f78" /></Icon></button>
    </div>
  );
}

function Watermark() {
  return (
    <div className="pointer-events-none absolute bottom-[7px] right-[15px] flex items-end">
      <svg width="60" height="60" viewBox="0 0 60 60" className="-mr-1" aria-hidden="true">
        <ellipse cx="25" cy="26" rx="21" ry="12" transform="rotate(-32 25 26)" fill="none" stroke="#6c9fd8" strokeWidth="1.500" opacity=".8" />
        <path d="M9 3l42 41-23-3L19 56l-1-22z" fill="#d34a5c" fillOpacity=".65" />
      </svg>
      <p className="flex flex-col items-center">
        <span className="text-[32px] font-bold italic leading-[34px] text-[#6d83ea]/85 [text-shadow:0_0_2px_#fff]">计算机协会</span>
        <span className="font-['Liberation_Mono'] text-[18px] font-bold leading-6 text-[#cc5468]/85">www.gxjmca.com</span>
      </p>
    </div>
  );
}

export default function App() {
  return (
    <div className={`relative flex h-screen flex-col overflow-hidden bg-[#bfdbff] ${UI}`}>
      <TitleBar />
      <TabStrip />
      <Ribbon />
      <FormulaBar />
      <main className="flex min-h-0 flex-1">
        <div id="sheet" className="relative min-w-0 flex-1 overflow-hidden">
          <Grid />
          <WordArt />
          <MiniToolbar />
          <ContextMenu />
        </div>
        <VScroll />
      </main>
      <SheetTabs />
      <StatusBar />
      <TaskBar />
      <Watermark />
      <div className="absolute -right-[25px] top-[396px] flex h-[47px] w-[47px] items-center rounded-full border-2 border-[#e2f5e2] bg-[linear-gradient(180deg,#7bd98a,#2ca647)] pl-1 text-[13px] font-bold text-white shadow-[0_0_3px_#444]">
        65
      </div>
    </div>
  );
}
